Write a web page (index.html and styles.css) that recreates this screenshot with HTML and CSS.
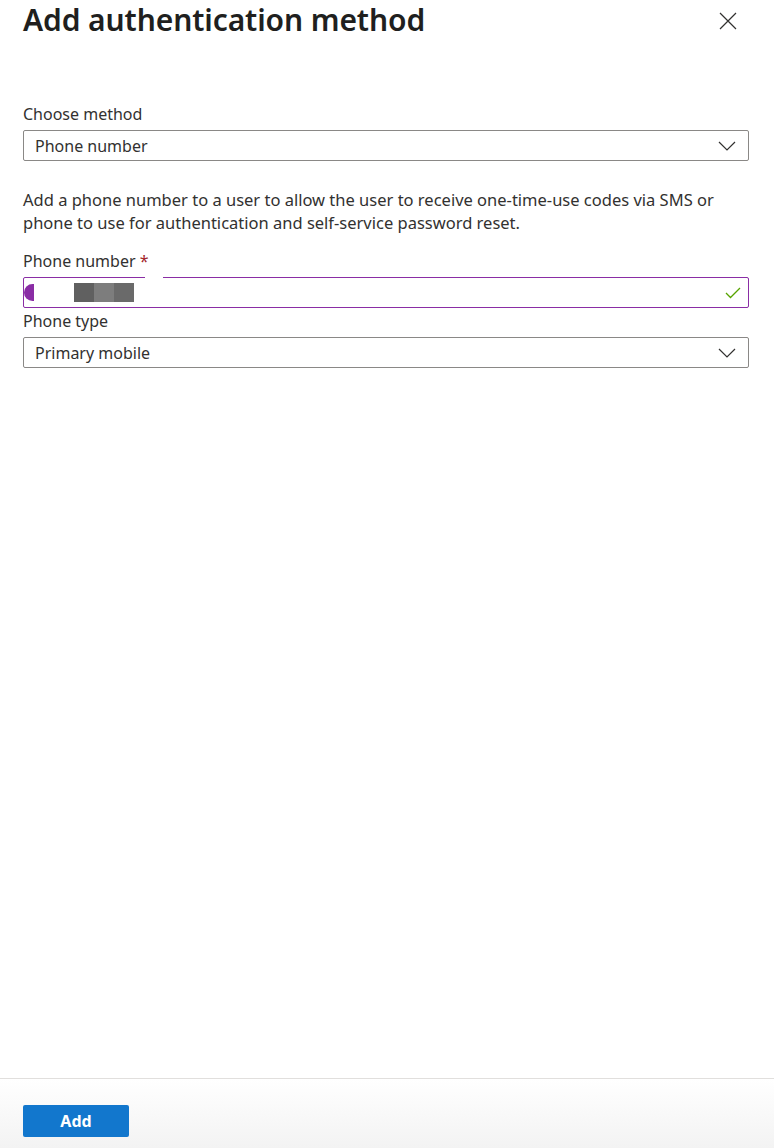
FILE: index.html
```html
<!DOCTYPE html>
<html>
<head>
<meta charset="utf-8">
<link rel="stylesheet" href="styles.css">
</head>
<body>
<div class="panel">
  <div class="content">
    <header class="head">
      <h1 class="title">Add authentication method</h1>
      <button class="close" aria-label="Close">
        <svg width="18" height="18" viewBox="0 0 18 18"><path d="M1 1L17 17M17 1L1 17" stroke="#323130" stroke-width="1.2" fill="none"/></svg>
      </button>
    </header>

    <div class="field first">
      <label class="label">Choose method</label>
      <div class="select">
        <span>Phone number</span>
        <svg class="chev" width="18" height="10" viewBox="0 0 18 10"><path d="M1 1L9 9L17 1" stroke="#323130" stroke-width="1.2" fill="none"/></svg>
      </div>
    </div>

    <p class="desc">Add a phone number to a user to allow the user to receive one-time-use codes via SMS or phone to use for authentication and self-service password reset.</p>

    <div class="field">
      <label class="label">Phone number <span class="req">*</span></label>
      <div class="input">
        <span class="gap"></span>
        <span class="dot"></span>
        <span class="redact"><i class="b1"></i><i class="b2"></i><i class="b3"></i></span>
        <svg class="check" width="16" height="12" viewBox="0 0 16 12"><path d="M1 6L5.5 10.5L15 1" stroke="#57a300" stroke-width="1.3" fill="none"/></svg>
      </div>
    </div>

    <div class="field tight">
      <label class="label">Phone type</label>
      <div class="select">
        <span>Primary mobile</span>
        <svg class="chev" width="18" height="10" viewBox="0 0 18 10"><path d="M1 1L9 9L17 1" stroke="#323130" stroke-width="1.2" fill="none"/></svg>
      </div>
    </div>
  </div>

  <footer class="foot">
    <button class="primary">Add</button>
  </footer>
</div>
</body>
</html>
```
FILE: styles.css
```css
* { box-sizing: border-box; }
html, body { margin: 0; padding: 0; }
body {
  font-family: "Noto Sans", "Open Sans", sans-serif;
  color: #323130;
  background: #fff;
}
.panel {
  width: 774px;
  height: 1148px;
  display: flex;
  flex-direction: column;
}
.content {
  flex: 1;
  padding: 0 25px 0 23px;
}
.head {
  display: flex;
  justify-content: space-between;
  align-items: flex-start;
  height: 40px;
}
.title {
  margin: 0;
  font-size: 30px;
  font-weight: 600;
  line-height: 40px;
  color: #201f1e;
  letter-spacing: -0.1px;
}
.close {
  border: 0;
  background: none;
  padding: 0;
  margin: 12px 12px 0 0;
  width: 18px;
  height: 18px;
  display: flex;
}
.field { display: flex; flex-direction: column; }
.field.first { margin-top: 62px; }
.label {
  font-size: 16px;
  line-height: 24px;
  height: 28px;
  color: #323130;
}
.req { color: #a4262c; }
.select, .input {
  height: 31px;
  border: 1px solid #8a8886;
  border-radius: 2px;
  display: flex;
  align-items: center;
  padding: 0 11px;
  font-size: 16px;
  position: relative;
}
.select span { flex: 1; }
.chev { margin-right: 1px; }
.desc {
  margin: 27px 0 15px;
  max-width: 716px;
  font-size: 16.5px;
  line-height: 23px;
  color: #323130;
}
.input {
  border-color: #8a2da5;
  padding: 0 7px 0 0;
}
.gap {
  position: absolute;
  top: -1px;
  left: 121px;
  width: 18px;
  height: 1px;
  background: #fff;
}
.dot {
  width: 10px;
  height: 17px;
  background: #8a2da5;
  border-radius: 9px 0 0 9px;
}
.redact {
  display: flex;
  margin-left: 40px;
  height: 19px;
}
.redact i { width: 20px; height: 19px; display: block; }
.b1 { background: #606060; }
.b2 { background: #7d7d7d; }
.b3 { background: #6a6a6a; }
.check { margin-left: auto; }
.field.tight .label { height: 29px; line-height: 27px; }
.foot {
  height: 70px;
  border-top: 1px solid #e1dfdd;
  background: linear-gradient(#ffffff, #f3f3f3);
  padding: 26px 23px 0;
}
.primary {
  width: 106px;
  height: 32px;
  background: #1277cd;
  border: 0;
  border-radius: 2px;
  color: #fff;
  font-family: "Noto Sans", sans-serif;
  font-size: 16px;
  font-weight: 700;
  line-height: 30px;
}
```
